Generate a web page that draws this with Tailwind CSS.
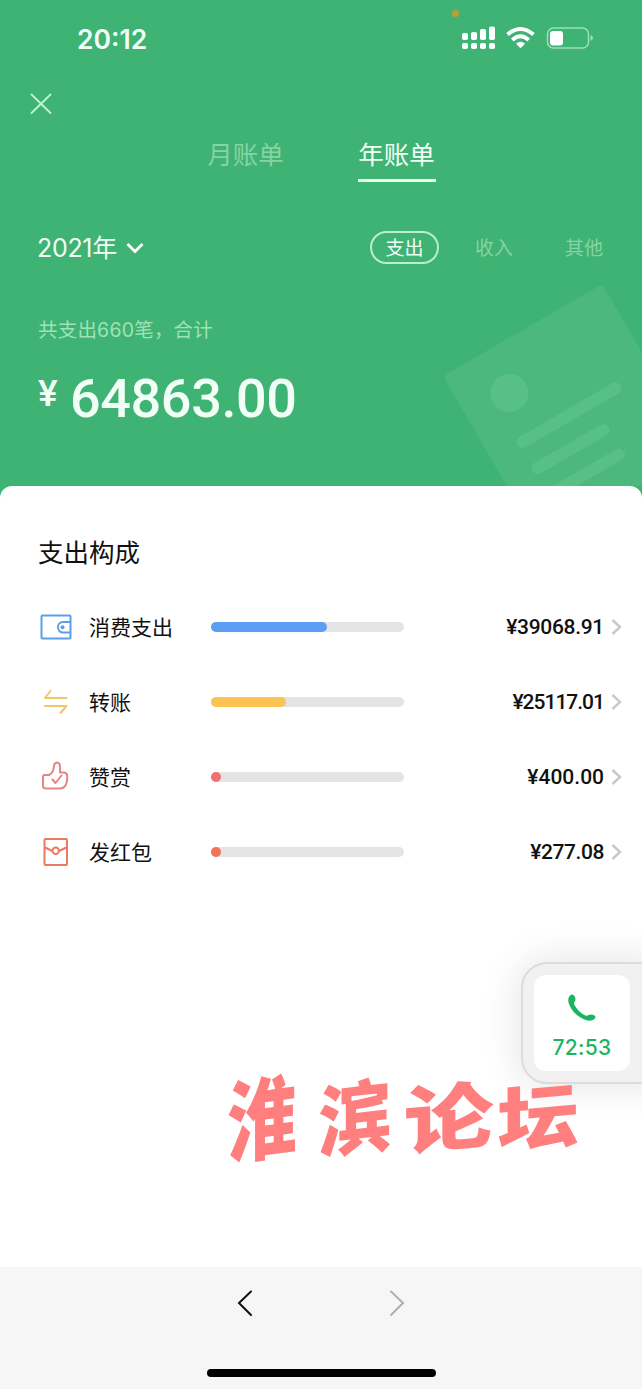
<!DOCTYPE html>
<html lang="zh-CN">
<head>
    <meta charset="UTF-8">
    <meta name="viewport" content="width=device-width, initial-scale=1.0">
    <title>年账单</title>
    <script src="https://cdn.jsdelivr.net/npm/@tailwindcss/browser@4"></script>
</head>
<body class="relative flex h-[1389px] w-[642px] flex-col overflow-hidden bg-[#3eb373] font-['Inter','Noto_Sans_CJK_SC',sans-serif] font-normal">

    <header class="relative h-[486px] shrink-0 overflow-hidden text-[#f2fff6]">
        <!-- Receipt decoration -->
        <svg class="absolute left-[440px] top-[280px]" width="202" height="210" viewBox="440 280 202 210">
            <g transform="translate(443 376) rotate(-30)">
                <rect width="184" height="240" rx="5" fill="#4cb87c"/>
                <g fill="none" stroke="#58bf87" stroke-width="12" stroke-linecap="round">
                    <path d="M36 97H143M36 127H112M36 156H113"/>
                </g>
                <circle cx="49" cy="48" r="19" fill="#58bf87"/>
            </g>
        </svg>

        <!-- Status bar -->
        <div class="relative flex h-[76px] items-center justify-between pl-[77px] pr-[48px]">
            <span class="pt-[2px] text-[26.500px] font-semibold leading-none">20:12</span>
            <span class="absolute left-[452px] top-[10px] h-[7px] w-[7px] rounded-full bg-[#bd9e35]"></span>
            <svg width="133" height="26" viewBox="461 25 133 26" fill="#fff">
                <rect x="462" y="33" width="6" height="7" rx="1.8"/>
                <rect x="471" y="32" width="6" height="8" rx="1.8"/>
                <rect x="480" y="29" width="6" height="11" rx="1.8"/>
                <rect x="489" y="26.500" width="6" height="13.500" rx="1.800"/>
                <rect x="462" y="43" width="6" height="6" rx="1.8"/>
                <rect x="471" y="43" width="6" height="6" rx="1.8"/>
                <rect x="480" y="43" width="6" height="6" rx="1.8"/>
                <rect x="489" y="43" width="6" height="6" rx="1.8"/>
                <path d="M520.500 48.300L516 43.800Q520.500 39.800 525 43.800Z"/>
                <g fill="none" stroke="#fff" stroke-width="4">
                    <path d="M507.500 34.500Q520.500 23.500 533.500 34.500M512.300 40Q520.500 32.500 528.700 40"/>
                </g>
                <rect x="547.500" y="28" width="41" height="20" rx="6" fill="none" stroke="#9be0b6" stroke-width="1.500"/>
                <rect x="550" y="31" width="13" height="14.500" rx="3"/>
                <path d="M590.500 35Q593 36 593 38T590.500 41Z" fill="#9be0b6"/>
            </svg>
        </div>

        <svg class="ml-[30px] mt-[17px]" width="22" height="22" viewBox="0 0 22 22" fill="none" stroke="#c3f4d3" stroke-width="1.800" stroke-linecap="round">
            <path d="M1.500 1.500L20.500 20M20.500 1.500L1.500 20"/>
        </svg>

        <!-- Tabs -->
        <nav class="mt-[21px] flex justify-center gap-[73px] text-[25.500px] leading-[38px]">
            <span class="w-[78px] text-center text-[#86d3a3]">月账单</span>
            <span class="w-[78px] border-b-[3px] border-[#e8fff0] pb-[5px] text-center">年账单</span>
        </nav>

        <!-- Year and type -->
        <div class="relative mt-[49px] flex h-[33px] items-center pl-[37px]">
            <span class="w-[80px] whitespace-nowrap pt-[3px] text-[25px] tracking-[-0.300px]">2021年</span>
            <svg class="ml-[9px]" width="18" height="12" viewBox="0 0 18 12" fill="none" stroke="#fff" stroke-width="2.800">
                <path d="M1.500 2L9 9.500L16.500 2"/>
            </svg>
            <span class="ml-[226px] flex h-[33px] w-[69px] items-center justify-center rounded-full border-2 border-[#b9efcb] pt-[4px] text-[19px]">支出</span>
            <span class="ml-[36px] pt-[4px] text-[19px] text-[#86d3a3]">收入</span>
            <span class="ml-[52px] pt-[4px] text-[19px] text-[#86d3a3]">其他</span>
        </div>

        <p class="relative ml-[38px] mt-[51px] text-[19.500px] leading-[30px] tracking-[0.200px] text-[#a0e2b8]">共支出660笔，合计</p>
        <div class="relative ml-[38px] mt-[24px] flex font-['Roboto',sans-serif] font-medium leading-[60px]">
            <span class="mr-[10px] w-[22px] text-[37px] leading-[50px]">¥</span>
            <span class="text-[54px] tracking-[-0.400px]">64863.00</span>
        </div>
    </header>

    <main class="h-[781px] shrink-0 rounded-t-[12px] bg-white pl-[38px] pr-[20px] text-[#111]">
        <h2 class="pt-[48px] text-[25.500px] leading-[38px]">支出构成</h2>

        <ul class="mt-[17.500px]">
            <li class="flex h-[75px] items-center">
                <svg width="36" height="36" viewBox="0 0 36 36" fill="none" stroke="#5c9fe8" stroke-width="2">
                    <rect x="3.500" y="6.500" width="29" height="23" rx="1"/>
                    <path d="M32 13H24.500A5.300 5.300 0 0 0 24.500 23.500H32"/>
                    <circle cx="24.500" cy="18.300" r="2" fill="#5c9fe8" stroke="none"/>
                </svg>
                <span class="ml-[15px] w-[122px] pt-[2px] text-[21px]">消费支出</span>
                <div class="h-[10px] w-[193px] rounded-full bg-[#e4e4e4]"><div class="h-full rounded-full bg-[#5b9ff5]" style="width: 116px"></div></div>
                <span class="ml-auto pt-[2px] font-['Roboto',sans-serif] text-[21px] font-medium tracking-[-0.300px]">¥39068.91</span>
                <svg class="ml-[7px]" width="11" height="18" viewBox="0 0 11 18" fill="none" stroke="#c9c9c9" stroke-width="2.500"><path d="M1.500 2L9 9L1.500 16"/></svg>
            </li>
            <li class="flex h-[75px] items-center">
                <svg width="36" height="36" viewBox="0 0 36 36" fill="none" stroke="#edc76c" stroke-width="2" stroke-linecap="round" stroke-linejoin="round">
                    <path d="M12.500 7L7 14H28.500M7 22H28.500L22.500 29"/>
                </svg>
                <span class="ml-[15px] w-[122px] pt-[2px] text-[21px]">转账</span>
                <div class="h-[10px] w-[193px] rounded-full bg-[#e4e4e4]"><div class="h-full rounded-full bg-[#fbc254]" style="width: 75px"></div></div>
                <span class="ml-auto pt-[2px] font-['Roboto',sans-serif] text-[21px] font-medium tracking-[-1px]">¥25117.01</span>
                <svg class="ml-[7px]" width="11" height="18" viewBox="0 0 11 18" fill="none" stroke="#c9c9c9" stroke-width="2.500"><path d="M1.500 2L9 9L1.500 16"/></svg>
            </li>
            <li class="flex h-[75px] items-center">
                <svg width="36" height="36" viewBox="0 0 36 36" fill="none" stroke="#e88484" stroke-width="2" stroke-linecap="round" stroke-linejoin="round">
                    <path d="M6.500 16H11Q15.500 14 16 7Q16.200 3.500 19 3.500T22 7V13.500H26Q29.500 14 29.300 18Q29 29.500 22 29.500H8Q5 29.500 5 27V17.500Q5 16 6.500 16Z"/>
                    <path d="M14.500 20.500L17.500 24L23.500 16.500"/>
                </svg>
                <span class="ml-[15px] w-[122px] pt-[2px] text-[21px]">赞赏</span>
                <div class="h-[10px] w-[193px] rounded-full bg-[#e4e4e4]"><div class="h-full rounded-full bg-[#f27070]" style="width: 10px"></div></div>
                <span class="ml-auto pt-[2px] font-['Roboto',sans-serif] text-[21px] font-medium">¥400.00</span>
                <svg class="ml-[7px]" width="11" height="18" viewBox="0 0 11 18" fill="none" stroke="#c9c9c9" stroke-width="2.500"><path d="M1.500 2L9 9L1.500 16"/></svg>
            </li>
            <li class="flex h-[75px] items-center">
                <svg width="36" height="36" viewBox="0 0 36 36" fill="none" stroke="#ea7b62" stroke-width="2">
                    <rect x="6.500" y="5" width="22.500" height="26" rx="1"/>
                    <path d="M7 13.500L14.500 17M21 17L28.500 13.500"/>
                    <circle cx="17.700" cy="16.700" r="3.200"/>
                </svg>
                <span class="ml-[15px] w-[122px] pt-[2px] text-[21px]">发红包</span>
                <div class="h-[10px] w-[193px] rounded-full bg-[#e4e4e4]"><div class="h-full rounded-full bg-[#f27358]" style="width: 10px"></div></div>
                <span class="ml-auto pt-[2px] font-['Roboto',sans-serif] text-[21px] font-medium tracking-[-0.400px]">¥277.08</span>
                <svg class="ml-[7px]" width="11" height="18" viewBox="0 0 11 18" fill="none" stroke="#c9c9c9" stroke-width="2.500"><path d="M1.500 2L9 9L1.500 16"/></svg>
            </li>
        </ul>
    </main>

    <footer class="flex h-[122px] shrink-0 flex-col items-center bg-[#f6f6f6]">
        <div class="mt-[22px] flex gap-[136px]">
            <svg width="16" height="28" viewBox="0 0 16 28" fill="none" stroke="#111" stroke-width="2" stroke-linecap="round"><path d="M14 2.500L2 14L14 26"/></svg>
            <svg width="16" height="28" viewBox="0 0 16 28" fill="none" stroke="#b0b0b0" stroke-width="2" stroke-linecap="round"><path d="M2 2.500L14 14L2 26"/></svg>
        </div>
        <div class="mt-[52px] h-2 w-[229px] rounded-full bg-black"></div>
    </footer>

    <!-- Floating call window -->
    <div class="absolute left-[521px] top-[962px] flex h-[122px] w-[140px] items-center rounded-l-[26px] border-2 border-[#dcdcdc] bg-[#f1f1f1] pl-[11px] shadow-[0_0_40px_rgba(0,0,0,0.12)]">
        <div class="flex h-[96px] w-[96px] flex-col items-center rounded-[12px] bg-white pt-[18px]">
            <svg width="30" height="30" viewBox="0 0 30 30" fill="#18b562">
                <path d="M3 2.500Q5 .5 7 2.500Q9.500 6 7.800 8.500Q6.500 9.700 7.200 11.500Q11 19 18.500 22.500Q20 23.300 21.500 22Q24 20.500 28 22.800Q29 24 27.500 26Q24 29 18 26.700Q6 22 1.800 10.500Q.3 5.500 3 2.500Z"/>
            </svg>
            <span class="mt-[11px] text-[21px] font-medium leading-[28px] tracking-[0.300px] text-[#18b562]">72:53</span>
        </div>
    </div>

    <!-- Watermark -->
    <div class="absolute left-[219px] top-[1058px] flex font-['Noto_Sans_CJK_SC',sans-serif] text-[80px] font-black leading-[110px] text-[#ff7f7f]">
        <span class="flex w-[86px] origin-center -skew-y-6 scale-x-[0.87] scale-y-[1.12] justify-center">淮</span>
        <span class="flex w-[100px] origin-center -skew-y-6 scale-x-[0.92] justify-center">滨</span>
        <span class="flex w-[87px] origin-center -skew-y-6 scale-x-[1.12] scale-y-[0.92] justify-center">论</span>
        <span class="flex w-[92px] origin-center -skew-y-6 scale-x-[1.02] scale-y-[0.88] justify-center">坛</span>
    </div>
</body>
</html>
